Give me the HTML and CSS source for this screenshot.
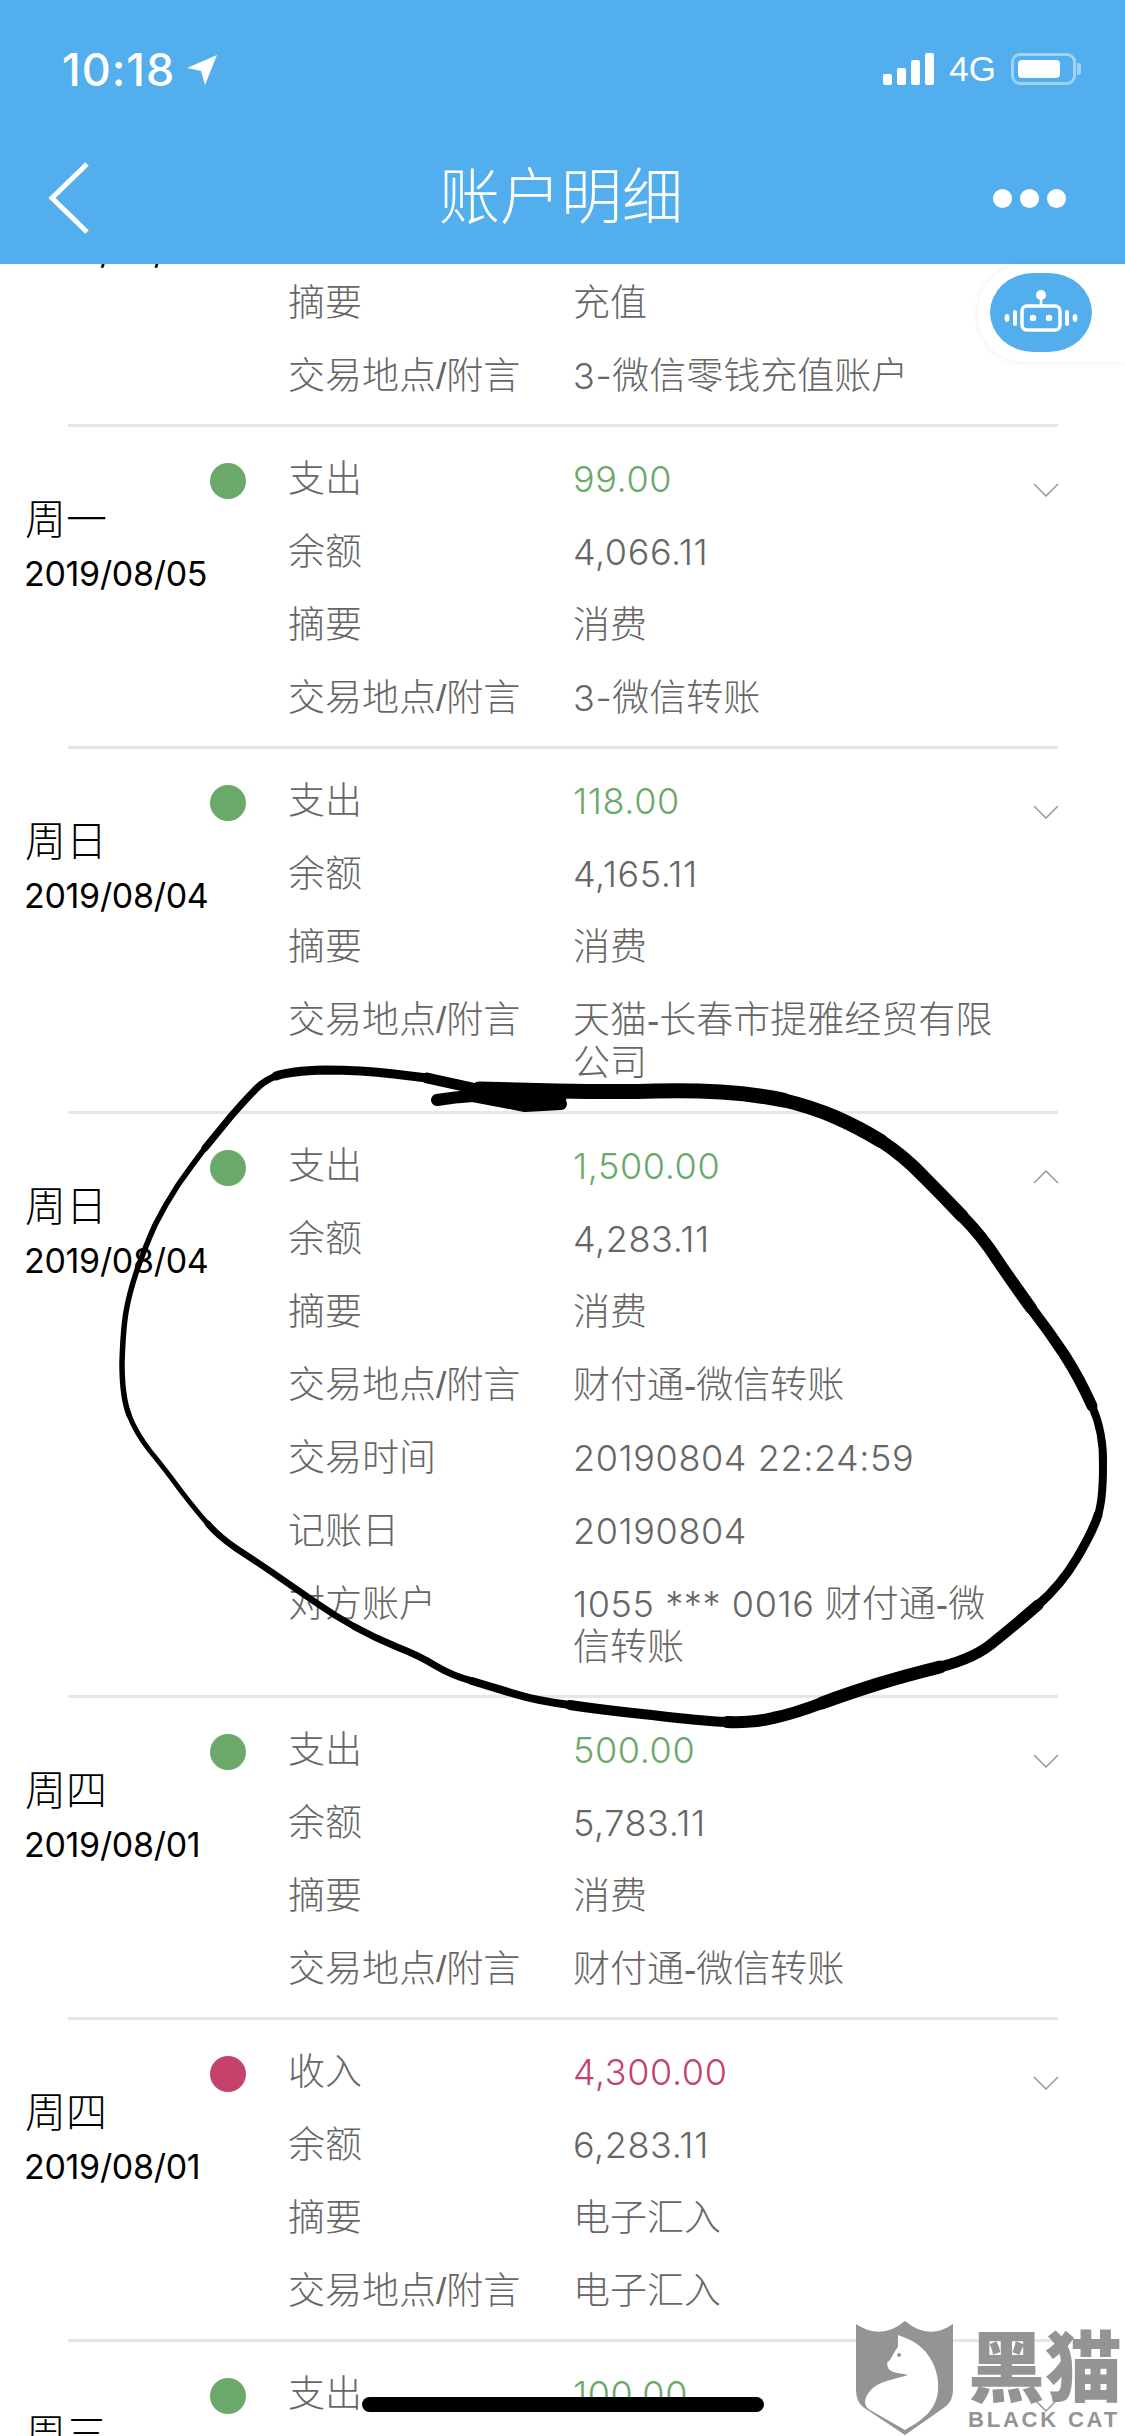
FILE: index.html
```html
<!DOCTYPE html>
<html lang="zh-CN">
<head>
  <meta charset="UTF-8" />
  <title>账户明细</title>
  <meta name="viewport" content="width=device-width, initial-scale=1.0" />
  <link rel="stylesheet" href="styles.css">
</head>
<body>
  <div class="screen">
    <header class="topbar">
      <div class="status">
        <div class="status-left">
          <span class="time">10:18</span>
          <svg class="arrow" width="30" height="31" viewBox="0 0 30 31"><path d="M30 1 L18 31 L14 17 L0 14 Z" fill="#fff"/></svg>
        </div>
        <div class="status-right">
          <div class="signal"><i class="s1"></i><i class="s2"></i><i class="s3"></i><i class="s4"></i></div>
          <span class="net">4G</span>
          <div class="battery"><i></i></div>
          <div class="battery-cap"></div>
        </div>
      </div>
      <div class="nav">
        <svg class="back" width="41" height="72" viewBox="0 0 41 72"><path d="M39 2 L4 36 L39 70" fill="none" stroke="#fff" stroke-width="5"/></svg>
        <h1>账户明细</h1>
        <div class="more"><i></i><i></i><i></i></div>
      </div>
    </header>

    <main class="list">
      <div class="list-inner">
        <div class="entry">
          <div class="when"><div class="day">周二</div><div class="date">2019/08/06</div></div>
          <span class="dot red"></span>
          <div class="rows">
            <div class="row"><span>收入</span><span class="num amt-red">100.00</span></div>
            <div class="row"><span>余额</span><span class="num">4,166.11</span></div>
            <div class="row"><span>摘要</span><span>充值</span></div>
            <div class="row"><span>交易地点/附言</span><span><span class="num">3-</span>微信零钱充值账户</span></div>
          </div>
        </div>
        <div class="sep"></div>

        <div class="entry">
          <div class="when"><div class="day">周一</div><div class="date">2019/08/05</div></div>
          <span class="dot"></span>
          <div class="rows">
            <div class="row"><span>支出</span><span class="num amt">99.00</span></div>
            <div class="row"><span>余额</span><span class="num">4,066.11</span></div>
            <div class="row"><span>摘要</span><span>消费</span></div>
            <div class="row"><span>交易地点/附言</span><span><span class="num">3-</span>微信转账</span></div>
          </div>
          <svg class="chev" width="26" height="14" viewBox="0 0 26 14"><path d="M1 1 L13 13 L25 1"/></svg>
        </div>
        <div class="sep"></div>

        <div class="entry">
          <div class="when"><div class="day">周日</div><div class="date">2019/08/04</div></div>
          <span class="dot"></span>
          <div class="rows">
            <div class="row"><span>支出</span><span class="num amt">118.00</span></div>
            <div class="row"><span>余额</span><span class="num">4,165.11</span></div>
            <div class="row"><span>摘要</span><span>消费</span></div>
            <div class="row"><span>交易地点/附言</span><span>天猫-长春市提雅经贸有限公司</span></div>
          </div>
          <svg class="chev" width="26" height="14" viewBox="0 0 26 14"><path d="M1 1 L13 13 L25 1"/></svg>
        </div>
        <div class="sep"></div>

        <div class="entry">
          <div class="when"><div class="day">周日</div><div class="date">2019/08/04</div></div>
          <span class="dot"></span>
          <div class="rows">
            <div class="row"><span>支出</span><span class="num amt">1,500.00</span></div>
            <div class="row"><span>余额</span><span class="num">4,283.11</span></div>
            <div class="row"><span>摘要</span><span>消费</span></div>
            <div class="row"><span>交易地点/附言</span><span>财付通-微信转账</span></div>
            <div class="row"><span>交易时间</span><span class="num">20190804 22:24:59</span></div>
            <div class="row"><span>记账日</span><span class="num">20190804</span></div>
            <div class="row"><span>对方账户</span><span><span class="num">1055 *** 0016</span> 财付通-微信转账</span></div>
          </div>
          <svg class="chev" width="26" height="14" viewBox="0 0 26 14"><path d="M1 13 L13 1 L25 13"/></svg>
        </div>
        <div class="sep"></div>

        <div class="entry">
          <div class="when"><div class="day">周四</div><div class="date">2019/08/01</div></div>
          <span class="dot"></span>
          <div class="rows">
            <div class="row"><span>支出</span><span class="num amt">500.00</span></div>
            <div class="row"><span>余额</span><span class="num">5,783.11</span></div>
            <div class="row"><span>摘要</span><span>消费</span></div>
            <div class="row"><span>交易地点/附言</span><span>财付通-微信转账</span></div>
          </div>
          <svg class="chev" width="26" height="14" viewBox="0 0 26 14"><path d="M1 1 L13 13 L25 1"/></svg>
        </div>
        <div class="sep"></div>

        <div class="entry">
          <div class="when"><div class="day">周四</div><div class="date">2019/08/01</div></div>
          <span class="dot red"></span>
          <div class="rows">
            <div class="row"><span>收入</span><span class="num amt-red">4,300.00</span></div>
            <div class="row"><span>余额</span><span class="num">6,283.11</span></div>
            <div class="row"><span>摘要</span><span>电子汇入</span></div>
            <div class="row"><span>交易地点/附言</span><span>电子汇入</span></div>
          </div>
          <svg class="chev" width="26" height="14" viewBox="0 0 26 14"><path d="M1 1 L13 13 L25 1"/></svg>
        </div>
        <div class="sep"></div>

        <div class="entry">
          <div class="when"><div class="day">周三</div><div class="date">2019/07/31</div></div>
          <span class="dot"></span>
          <div class="rows">
            <div class="row"><span>支出</span><span class="num amt">100.00</span></div>
          </div>
          <svg class="chev" width="26" height="14" viewBox="0 0 26 14"><path d="M1 1 L13 13 L25 1"/></svg>
        </div>
      </div>
    </main>

    <div class="robot-tab">
      <div class="robot">
        <svg width="80" height="50" viewBox="0 0 80 50">
          <g fill="#fff">
            <circle cx="40" cy="7" r="5"/>
            <rect x="38.7" y="8" width="2.6" height="10"/>
            <rect x="21" y="18" width="38" height="24" rx="5" fill="none" stroke="#fff" stroke-width="3.5"/>
            <circle cx="32" cy="30" r="3.2"/>
            <circle cx="48" cy="30" r="3.2"/>
            <rect x="12" y="22" width="4" height="16" rx="2"/>
            <rect x="64" y="22" width="4" height="16" rx="2"/>
            <ellipse cx="6" cy="30" rx="2.4" ry="4"/>
            <ellipse cx="74" cy="30" rx="2.4" ry="4"/>
          </g>
        </svg>
      </div>
    </div>

    <!-- pen circle drawn over the screenshot -->
    <svg class="ink" width="1125" height="2436" viewBox="0 0 1125 2436">
      <path stroke-width="12" d="M437 1100 Q455 1097 473 1096 L525 1106 L561 1104"/>
      <path stroke-width="11" d="M561 1098 L525 1100 L486 1091 L427 1078"/>
      <path stroke-width="9" d="M427 1078 L394 1074 Q361 1070 325 1070 Q290 1071 276 1076"/>
      <path stroke-width="7" d="M276 1076 Q263 1081 255 1090 Q247 1098 232 1115 Q218 1132 205 1148"/>
      <path stroke-width="5.5" d="M205 1148 Q192 1165 178 1185 Q165 1205 155 1225 Q146 1245 137 1270 Q129 1294 126 1312 Q123 1330 122 1363 Q122 1397 129 1415"/>
      <path stroke-width="5" d="M129 1415 Q136 1433 150 1451 Q165 1469 181 1491 Q198 1513 208 1524"/>
      <path stroke-width="6.5" d="M208 1524 Q218 1536 237 1549 Q257 1562 276 1575 Q296 1589 315 1602 Q335 1616 355 1627"/>
      <path stroke-width="7" d="M355 1627 Q375 1638 397 1647 Q420 1656 436 1666 Q453 1676 472 1681"/>
      <path stroke-width="8" d="M472 1681 Q492 1687 515 1694 Q538 1701 570 1705"/>
      <path stroke-width="10" d="M570 1705 Q603 1710 652 1715 Q701 1721 727 1722"/>
      <path stroke-width="12" d="M727 1722 Q754 1723 773 1718 Q793 1714 822 1703"/>
      <path stroke-width="13" d="M822 1703 Q852 1692 878 1684 Q904 1676 940 1667"/>
      <path stroke-width="11" d="M940 1667 Q976 1658 995 1641 Q1015 1625 1038 1605"/>
      <path stroke-width="9" d="M1038 1605 Q1061 1585 1077 1558 Q1093 1531 1098 1515"/>
      <path stroke-width="8" d="M1098 1515 Q1103 1500 1103 1466 Q1104 1433 1092 1406"/>
      <path stroke-width="11" d="M1092 1406 Q1080 1379 1064 1354 Q1048 1330 1031 1308"/>
      <path stroke-width="12" d="M1031 1308 Q1015 1286 998 1261 Q982 1236 962 1216"/>
      <path stroke-width="13" d="M962 1216 Q943 1196 923 1176 Q904 1156 881 1141"/>
      <path stroke-width="14" d="M881 1141 Q858 1127 835 1117 Q812 1107 783 1100"/>
      <path stroke-width="15" d="M783 1100 Q754 1094 721 1092 Q688 1090 655 1091 Q623 1092 557 1091 L479 1089"/>
    </svg>

    <div class="home-bar"></div>

    <div class="watermark">
      <svg width="97" height="115" viewBox="0 0 97 115">
        <path fill="#8c8c8c" d="M0 3 Q25 20 49 0 Q73 20 97 3 V69 Q97 80 89 86 L49 114 L7 86 Q0 80 0 69 Z"/>
        <path fill="#fff" d="M42 14 L52 18 C75 28 84 52 82 70 C80 90 65 100 49 109 L14 89 C6 84 9 76 14 70 C22 60 40 58 52 54 C44 52 35 52 32 47 L31 42 C36 38 38 30 42 26 Z"/>
        <circle cx="43" cy="34" r="2" fill="#8c8c8c"/>
      </svg>
      <div class="wm-text">
        <div class="wm-cn">黑猫</div>
        <div class="wm-en">BLACK CAT</div>
      </div>
    </div>
  </div>
</body>
</html>
```

FILE: styles.css
```css
* {
  box-sizing: border-box;
}
body {
  margin: 0;
  background: #fff;
  font-family: "Liberation Sans", "Noto Sans CJK SC", sans-serif;
}
.screen {
  position: relative;
  width: 1125px;
  height: 2436px;
  overflow: hidden;
  display: flex;
  flex-direction: column;
}

/* top bar */
.topbar {
  height: 264px;
  background: #52aeec;
  color: #fff;
  flex: none;
}
.status {
  height: 138px;
  padding: 0 44px 0 62px;
  display: flex;
  justify-content: space-between;
  align-items: center;
}
.status-left {
  display: flex;
  align-items: center;
  gap: 12px;
}
.time {
  font-family: Inter, "Liberation Sans", sans-serif;
  font-size: 45px;
  font-weight: 500;
  letter-spacing: 1px;
}
.status-right {
  display: flex;
  align-items: center;
}
.signal {
  display: flex;
  align-items: flex-end;
  gap: 5px;
  height: 32px;
  margin-right: 15px;
}
.signal i {
  width: 9px;
  background: #fff;
  border-radius: 2px;
}
.s1 { height: 11px; }
.s2 { height: 17px; }
.s3 { height: 25px; }
.s4 { height: 32px; }
.net {
  font-size: 35px;
  margin-right: 15px;
}
.battery {
  width: 65px;
  height: 32px;
  border: 3px solid rgba(255, 255, 255, 0.45);
  border-radius: 9px;
  padding: 4px;
}
.battery i {
  display: block;
  width: 42px;
  height: 100%;
  background: #fff;
  border-radius: 4px;
}
.battery-cap {
  width: 4px;
  height: 12px;
  margin-left: 1px;
  background: rgba(255, 255, 255, 0.45);
  border-radius: 0 3px 3px 0;
}
.nav {
  height: 126px;
  padding: 0 51px 6px 48px;
  display: grid;
  grid-template-columns: 1fr auto 1fr;
  align-items: center;
}
.nav h1 {
  margin: 0;
  font-size: 61px;
  font-weight: 300;
  line-height: 70px;
}
.more {
  display: flex;
  justify-content: flex-end;
  gap: 8px;
  margin-right: 8px;
}
.more i {
  width: 19px;
  height: 19px;
  background: #fff;
  border-radius: 50%;
}

/* list */
.list {
  flex: 1;
  overflow: hidden;
}
.list-inner {
  margin-top: -159px;
}
.entry {
  display: flex;
  align-items: flex-start;
  padding: 15px 0 11px 25px;
}
.sep {
  height: 3px;
  margin: 0 67px 0 68px;
  background: #e6e6e6;
}
.when {
  width: 185px;
  padding-top: 52px;
  color: #000;
}
.day {
  font-size: 41px;
  font-weight: 300;
  line-height: 52px;
}
.date {
  font-family: Inter, "Liberation Sans", sans-serif;
  font-size: 34px;
  line-height: 55px;
  letter-spacing: -0.3px;
  margin-left: -1px;
}
.dot {
  flex: none;
  width: 36px;
  height: 36px;
  margin: 21px 42px 0 0;
  border-radius: 50%;
  background: #6aa96a;
}
.dot.red {
  background: #c5436a;
}
.rows {
  width: 717px;
  padding-top: 1px;
  color: #666;
  font-size: 37px;
  font-weight: 300;
}
.row {
  display: grid;
  grid-template-columns: 285px 1fr;
  padding: 15px 0;
  line-height: 43px;
}
.num {
  font-family: Inter, "Liberation Sans", sans-serif;
  font-size: 36px;
  font-weight: 300;
  letter-spacing: 0.6px;
}
.amt {
  color: #6aa96a;
}
.amt-red {
  color: #c5436a;
}
.chev {
  flex: none;
  margin: 41px 0 0 28px;
}
.chev path {
  fill: none;
  stroke: #999;
  stroke-width: 1.5;
}

/* things that lie over the list */
.robot-tab {
  position: absolute;
  top: 265px;
  right: 0;
  width: 147px;
  height: 97px;
  padding: 8px 0 0 12px;
  background: #fff;
  border-radius: 46px 0 0 46px;
  box-shadow: 0 0 6px rgba(0, 0, 0, 0.08);
}
.robot {
  width: 102px;
  height: 79px;
  background: #52aeec;
  border-radius: 44px / 40px;
  display: flex;
  align-items: center;
  justify-content: center;
}
.ink {
  position: absolute;
  top: 0;
  left: 0;
  pointer-events: none;
}
.ink path {
  fill: none;
  stroke: #000;
  stroke-linecap: round;
  stroke-linejoin: round;
}
.home-bar {
  position: absolute;
  left: 362px;
  top: 2397px;
  width: 402px;
  height: 15px;
  background: #000;
  border-radius: 8px;
}
.watermark {
  position: absolute;
  left: 856px;
  top: 2321px;
  display: flex;
  gap: 15px;
  opacity: 0.92;
}
.wm-text {
  width: 154px;
  color: #8c8c8c;
  font-weight: 700;
}
.wm-cn {
  font-family: "Noto Sans CJK SC", sans-serif;
  font-size: 77px;
  font-weight: 900;
  line-height: 76px;
  margin-top: 4px;
}
.wm-en {
  font-size: 22px;
  line-height: 26px;
  letter-spacing: 2.8px;
  white-space: nowrap;
  margin-top: 6px;
}
```
